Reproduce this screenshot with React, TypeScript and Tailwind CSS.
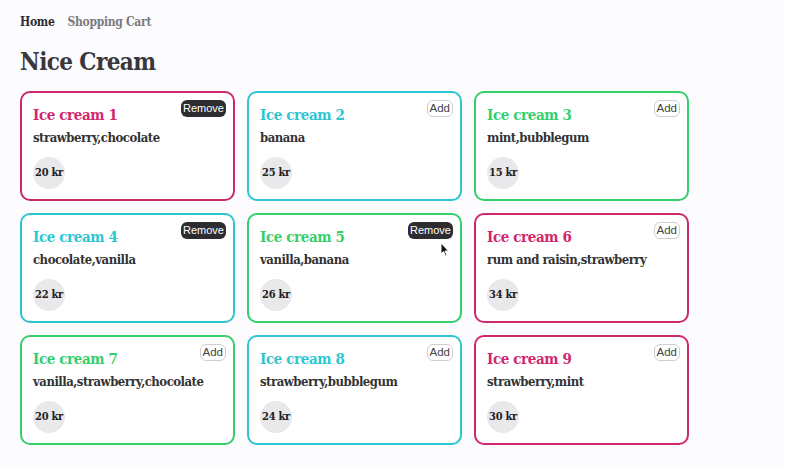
const iceCreams = [
  { id: 1, flavours: 'strawberry,chocolate', price: 20, color: 'pink', inCart: true },
  { id: 2, flavours: 'banana', price: 25, color: 'cyan', inCart: false },
  { id: 3, flavours: 'mint,bubblegum', price: 15, color: 'green', inCart: false },
  { id: 4, flavours: 'chocolate,vanilla', price: 22, color: 'cyan', inCart: true },
  { id: 5, flavours: 'vanilla,banana', price: 26, color: 'green', inCart: true },
  { id: 6, flavours: 'rum and raisin,strawberry', price: 34, color: 'pink', inCart: false },
  { id: 7, flavours: 'vanilla,strawberry,chocolate', price: 20, color: 'green', inCart: false },
  { id: 8, flavours: 'strawberry,bubblegum', price: 24, color: 'cyan', inCart: false },
  { id: 9, flavours: 'strawberry,mint', price: 30, color: 'pink', inCart: false },
] as const;

const borderColors = {
  pink: 'border-[#d0276c] text-[#d0276c]',
  cyan: 'border-[#2cc6d2] text-[#2cc6d2]',
  green: 'border-[#34cf6a] text-[#34cf6a]',
};

const slab = "font-['Roboto_Slab','DejaVu_Serif_Condensed','DejaVu_Serif',serif]";
const sans = "font-['Liberation_Sans','Helvetica',sans-serif]";

function Cursor() {
  return (
    <svg
      className="pointer-events-none absolute left-[440px] top-[242px]"
      width="10"
      height="15"
      viewBox="0 0 10 15"
    >
      <path d="M1 1 L1 12 L3.5 9.5 L5.5 14 L7 13.3 L5 9 L8.5 9 Z" fill="#111" stroke="#fff" strokeWidth="1" />
    </svg>
  );
}

function IceCreamCard({ item }: { item: (typeof iceCreams)[number] }) {
  return (
    <div
      className={`flex h-[110px] w-[215px] flex-col rounded-[10px] border-2 bg-white pl-[11px] pr-[7px] pt-[7px] ${borderColors[item.color]}`}
    >
      <div className="flex items-start justify-between">
        <h3 className="mt-[5px] text-[15px] font-bold leading-5 tracking-[-0.4px]">Ice cream {item.id}</h3>
        {item.inCart ? (
          <button
            className={`rounded-[6px] bg-[#2d2c30] px-[2px] text-[11px] leading-[17px] text-white ${sans}`}
          >
            Remove
          </button>
        ) : (
          <button
            className={`rounded-[6px] border border-[#cfcfd2] bg-white px-[2px] text-[11.5px] leading-[15px] text-[#444] ${sans}`}
          >
            Add
          </button>
        )}
      </div>
      <p className="mt-[3px] text-[13px] font-bold leading-5 tracking-[-0.5px] text-[#333]">{item.flavours}</p>
      <div className="mt-[9px] flex h-8 w-8 items-center justify-center rounded-full bg-[#e9e8eb] text-[11px] font-bold tracking-[-0.3px] text-[#222]">
        {item.price} kr
      </div>
    </div>
  );
}

export default function App() {
  return (
    <div className={`relative min-h-[470px] bg-[#fcfbfd] px-5 pt-[14px] ${slab}`}>
      <nav className="flex gap-[13px] text-[12px] font-bold leading-4 tracking-[-0.3px]">
        <a className="text-[#2d2c30]">Home</a>
        <a className="text-[#7a797d]">Shopping Cart</a>
      </nav>
      <h1 className="mt-4 text-[24px] font-bold leading-8 tracking-[-0.6px] text-[#38373b]">Nice Cream</h1>
      <div className="mt-[13px] grid w-max grid-cols-3 gap-3">
        {iceCreams.map((item) => (
          <IceCreamCard key={item.id} item={item} />
        ))}
      </div>
      <Cursor />
    </div>
  );
}
